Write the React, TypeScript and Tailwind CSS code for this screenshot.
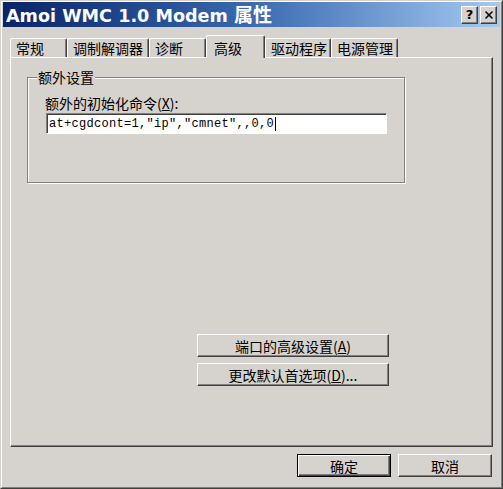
import { X } from "lucide-react";

const cjk = "font-['Noto_Sans_CJK_SC',sans-serif]";

// raised 3d edge used by buttons
const raised =
  "border border-t-white border-l-white border-r-[#404040] border-b-[#404040] shadow-[inset_-1px_-1px_0_#808080]";

function Tab({ label, width, active }: { label: string; width: string; active?: boolean }) {
  return (
    <div
      className={`${width} ${
        active ? "h-[23px] -mb-px relative z-10 pl-[7px] pt-[1px]" : "h-[19px] pl-[5px]"
      } flex items-center rounded-t-[2px] border-t border-l border-r border-t-white border-l-white border-r-[#404040] shadow-[inset_-1px_0_0_#808080] bg-[#d6d2ce] text-[14px] leading-[16px] text-black`}
    >
      {label}
    </div>
  );
}

function Button({
  children,
  className,
  primary,
}: {
  children: React.ReactNode;
  className?: string;
  primary?: boolean;
}) {
  return (
    <button
      type="button"
      className={`${className} h-[23px] flex items-center justify-center text-[14px] leading-[16px] text-black bg-[#d6d2ce] ${
        primary
          ? "border border-black shadow-[inset_1px_1px_0_#fff,inset_-1px_-1px_0_#404040,inset_-2px_-2px_0_#808080]"
          : raised
      }`}
    >
      {children}
    </button>
  );
}

function App() {
  return (
    <div className={`w-[503px] h-[489px] ${cjk} border border-t-[#d6d2ce] border-l-[#d6d2ce] border-r-[#404040] border-b-[#404040]`}>
      <div className="h-full w-full border border-t-white border-l-white border-r-[#808080] border-b-[#808080] bg-[#d6d2ce] px-px flex flex-col">
        {/* title bar */}
        <div className="h-[25px] flex items-center bg-gradient-to-r from-[#0a246a] via-[#3a6ab0] to-[#a6caf0] pl-[3px] pr-[3px]">
          <span className="font-['DejaVu_Sans','Noto_Sans_CJK_SC',sans-serif] font-bold text-[17.6px] leading-[20px] text-white">
            Amoi WMC 1.0 Modem <span className={`${cjk} text-[19px]`}>属性</span>
          </span>
          <div className="ml-auto flex gap-[2px]">
            <div className={`w-[17px] h-[18px] bg-[#d6d2ce] flex items-center justify-center font-['DejaVu_Sans',sans-serif] font-bold text-[13px] leading-none ${raised}`}>
              ?
            </div>
            <div className={`w-[17px] h-[18px] bg-[#d6d2ce] flex items-center justify-center ${raised}`}>
              <X size={12} strokeWidth={3.2} color="#000" />
            </div>
          </div>
        </div>

        {/* tabs */}
        <div className="mt-[8px] h-[22px] pl-[7px] flex items-end">
          <Tab label="常规" width="w-[57px]" />
          <Tab label="调制解调器" width="w-[82px]" />
          <Tab label="诊断" width="w-[57px]" />
          <Tab label="高级" width="w-[59px]" active />
          <Tab label="驱动程序" width="w-[66px]" />
          <Tab label="电源管理" width="w-[67px]" />
        </div>

        {/* page */}
        <div className="ml-[7px] mr-[7px] h-[390px] flex flex-col border border-t-white border-l-white border-r-[#404040] border-b-[#404040] shadow-[inset_-1px_-1px_0_#808080]">
          <div className="relative ml-[16px] mt-[19px] w-[378px] h-[106px] border border-[#808080] shadow-[inset_1px_1px_0_#fff,1px_1px_0_#fff] flex flex-col">
            <span className="absolute left-[9px] -top-[9px] px-[1px] bg-[#d6d2ce] text-[14px] leading-[16px] text-black">
              额外设置
            </span>
            <div className="mt-[17px] ml-[17px] text-[14px] leading-[16px] text-black">
              额外的初始化命令(<span className="underline">X</span>):
            </div>
            <div className="mt-[2px] ml-[18px] w-[341px] h-[21px] bg-white border border-t-[#808080] border-l-[#808080] border-r-white border-b-white shadow-[inset_1px_1px_0_#404040] flex items-center pl-[2px]">
              <span className="font-['Liberation_Mono',monospace] text-[12px] leading-[14px] tracking-[0.3px] text-black whitespace-pre">
                at+cgdcont=1,"ip","cmnet",,0,0
              </span>
              <span className="w-px h-[14px] bg-black ml-px" />
            </div>
          </div>

          <div className="ml-[186px] mt-[151px] flex flex-col gap-[6px]">
            <Button className="w-[192px]">
              端口的高级设置(<span className="underline">A</span>)
            </Button>
            <Button className="w-[192px]">
              更改默认首选项(<span className="underline">D</span>)...
            </Button>
          </div>
        </div>

        {/* footer */}
        <div className="mt-[7px] mr-[8px] flex justify-end gap-[7px]">
          <Button className="w-[94px]" primary>
            确定
          </Button>
          <Button className="w-[94px]">取消</Button>
        </div>
      </div>
    </div>
  );
}

export default App;
